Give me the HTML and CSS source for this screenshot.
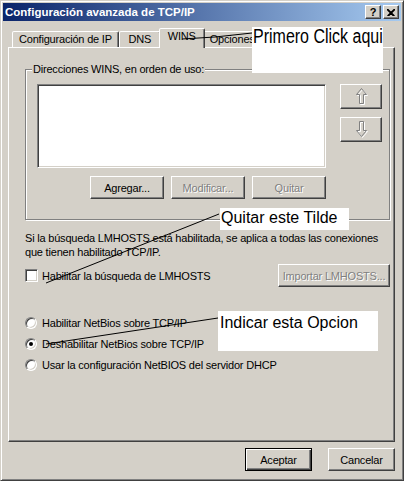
FILE: index.html
```html
<!DOCTYPE html>
<html lang="es">
<head>
<meta charset="UTF-8">
<meta name="viewport" content="width=device-width, initial-scale=1.0">
<title>Configuración avanzada de TCP/IP</title>
<link rel="stylesheet" href="styles.css">
</head>
<body>

<div class="ventana">
  <div class="barra-titulo">
    <span class="titulo">Configuración avanzada de TCP/IP</span>
    <div class="botones-titulo">
      <span class="btn-titulo">?</span>
      <span class="btn-titulo">
        <svg width="8" height="7" viewBox="0 0 8 7"><path d="M0.5 0 L7.5 7 M0 0.5 L6.5 7 M7.5 0 L0.5 7 M8 0.5 L1.5 7" stroke="#000" stroke-width="1.2"/></svg>
      </span>
    </div>
  </div>

  <div class="cuerpo">
    <div class="pestanas">
      <div class="pestana">Configuración de IP</div>
      <div class="pestana">DNS</div>
      <div class="pestana activa">WINS</div>
      <div class="pestana">Opciones</div>
    </div>

    <div class="panel">
      <fieldset class="grupo">
        <legend>Direcciones WINS, en orden de uso:</legend>
        <div class="wins">
          <div class="wins-izq">
            <div class="lista"></div>
            <div class="fila-botones">
              <button class="boton">Agregar...</button>
              <button class="boton" disabled>Modificar...</button>
              <button class="boton" disabled>Quitar</button>
            </div>
          </div>
          <div class="flechas">
            <button class="boton flecha" disabled>
              <svg width="13" height="17" viewBox="0 0 13 17">
                <path d="M7.5 1.5 L12.5 7.5 L9.5 7.5 L9.5 16.5 L5.5 16.5 L5.5 7.5 L2.5 7.5 Z" fill="none" stroke="#fff"/>
                <path d="M6.5 0.5 L11.5 6.5 L8.5 6.5 L8.5 15.5 L4.5 15.5 L4.5 6.5 L1.5 6.5 Z" fill="none" stroke="#808080"/>
              </svg>
            </button>
            <button class="boton flecha" disabled>
              <svg width="13" height="17" viewBox="0 0 13 17">
                <path d="M7.5 16.5 L12.5 10.5 L9.5 10.5 L9.5 1.5 L5.5 1.5 L5.5 10.5 L2.5 10.5 Z" fill="none" stroke="#fff"/>
                <path d="M6.5 15.5 L11.5 9.5 L8.5 9.5 L8.5 0.5 L4.5 0.5 L4.5 9.5 L1.5 9.5 Z" fill="none" stroke="#808080"/>
              </svg>
            </button>
          </div>
        </div>
      </fieldset>

      <p class="aviso">Si la búsqueda LMHOSTS está habilitada, se aplica a todas las conexiones<br>que tienen habilitado TCP/IP.</p>

      <div class="fila-lmhosts">
        <label class="opcion"><span class="casilla"></span>Habilitar la búsqueda de LMHOSTS</label>
        <button class="boton importar" disabled>Importar LMHOSTS...</button>
      </div>

      <div class="radios">
        <label class="opcion"><span class="radio"></span>Habilitar NetBios sobre TCP/IP</label>
        <label class="opcion"><span class="radio marcado"></span>Deshabilitar NetBios sobre TCP/IP</label>
        <label class="opcion"><span class="radio"></span>Usar la configuración NetBIOS del servidor DHCP</label>
      </div>
    </div>

    <div class="pie">
      <button class="boton pred">Aceptar</button>
      <button class="boton">Cancelar</button>
    </div>
  </div>

  <!-- anotaciones pegadas encima de la captura -->
  <svg class="trazos" width="404" height="481" viewBox="0 0 404 481">
    <polyline points="182,39 215,37 252,33" fill="none" stroke="#000"/>
    <line x1="219" y1="214" x2="46" y2="283" stroke="#000"/>
    <line x1="218" y1="318" x2="46" y2="344" stroke="#000"/>
  </svg>
  <div class="nota nota-1"><span>Primero Click aqui</span></div>
  <div class="nota nota-2">Quitar este Tilde</div>
  <div class="nota nota-3">Indicar esta Opcion</div>
</div>

</body>
</html>
```

FILE: styles.css
```css
* { margin: 0; padding: 0; box-sizing: border-box; }

body {
  font-family: "Liberation Sans", Arial, sans-serif;
  font-size: 11px;
  letter-spacing: -0.2px;
  color: #000;
  background: #d4d0c8;
}

.ventana {
  position: relative;
  width: 404px;
  height: 481px;
  background: #d4d0c8;
  border: 1px solid;
  border-color: #d4d0c8 #404040 #404040 #d4d0c8;
  box-shadow: inset 1px 1px #fff, inset -1px -1px #808080;
  padding: 2px;
}

/* Barra de titulo */

.barra-titulo {
  height: 18px;
  background: linear-gradient(90deg, #0a246a, #a6caf0);
  display: flex;
  align-items: center;
  justify-content: space-between;
  padding: 0 2px;
}

.titulo {
  color: #fff;
  font-weight: bold;
  font-size: 11.5px;
  letter-spacing: 0;
}

.botones-titulo {
  display: flex;
  gap: 2px;
}

.btn-titulo {
  width: 16px;
  height: 14px;
  background: #d4d0c8;
  border: 1px solid;
  border-color: #fff #404040 #404040 #fff;
  box-shadow: inset -1px -1px #808080;
  display: flex;
  align-items: center;
  justify-content: center;
  font-weight: bold;
  font-size: 11px;
  line-height: 1;
}

/* Pestanas */

.cuerpo {
  padding: 7px 6px 0 5px;
}

.pestanas {
  display: flex;
  align-items: flex-end;
  height: 20px;
  padding-left: 4px;
  margin-bottom: -1px;
  position: relative;
  z-index: 1;
}

.pestana {
  height: 16px;
  min-width: 42px;
  margin-bottom: 1px;
  padding: 0 6px;
  line-height: 15px;
  text-align: center;
  white-space: nowrap;
  border: 1px solid;
  border-bottom: none;
  border-color: #fff #404040 transparent #fff;
  box-shadow: inset -1px 0 #808080;
  border-radius: 2px 2px 0 0;
  background: #d4d0c8;
}

.pestana.activa {
  height: 20px;
  margin: 0 -2px;
  padding: 0 8px;
  line-height: 15px;
  position: relative;
  z-index: 2;
}

.panel {
  height: 395px;
  border: 1px solid;
  border-color: #fff #404040 #404040 #fff;
  box-shadow: inset -1px -1px #808080;
  padding: 0 4px 0 16px;
}

/* Grupo WINS */

.grupo {
  margin-top: 15px;
  border: 1px solid #808080;
  box-shadow: inset 1px 1px #fff, 1px 1px #fff;
  padding: 8px 7px 20px 11px;
  min-width: 0;
}

.grupo legend {
  margin-left: -5px;
  padding: 0 1px;
  line-height: 13px;
  background: #d4d0c8;
}

.wins {
  display: flex;
  gap: 14px;
}

.wins-izq {
  width: 289px;
}

.lista {
  height: 84px;
  background: #fff;
  border: 1px solid;
  border-color: #808080 #fff #fff #808080;
  box-shadow: inset 1px 1px #404040, inset -1px -1px #d4d0c8;
}

.fila-botones {
  display: flex;
  justify-content: flex-end;
  gap: 7px;
  margin-top: 8px;
}

.flechas {
  display: flex;
  flex-direction: column;
  gap: 8px;
}

/* Botones */

.boton {
  font: inherit;
  letter-spacing: inherit;
  color: #000;
  width: 74px;
  height: 23px;
  background: #d4d0c8;
  border: 1px solid;
  border-color: #fff #404040 #404040 #fff;
  box-shadow: inset -1px -1px #808080;
  display: flex;
  align-items: center;
  justify-content: center;
}

.boton:disabled {
  color: #808080;
  text-shadow: 1px 1px #fff;
}

.boton.flecha {
  width: 42px;
  height: 25px;
}

.boton.importar {
  width: 112px;
}

.boton.pred {
  border: 1px solid #000;
  box-shadow: inset 1px 1px #fff, inset -1px -1px #404040, inset -2px -2px #808080;
}

/* Opciones de abajo */

.aviso {
  margin-top: 11px;
  line-height: 14px;
}

.fila-lmhosts {
  display: flex;
  align-items: center;
  justify-content: space-between;
  margin-top: 5px;
}

.opcion {
  display: flex;
  align-items: center;
  gap: 4px;
  height: 21px;
  white-space: nowrap;
}

.casilla {
  width: 13px;
  height: 13px;
  background: #fff;
  border: 1px solid;
  border-color: #808080 #fff #fff #808080;
  box-shadow: inset 1px 1px #404040, inset -1px -1px #d4d0c8;
}

.radios {
  margin-top: 25px;
  display: flex;
  flex-direction: column;
}

.radio {
  width: 12px;
  height: 12px;
  margin-right: 1px;
  border-radius: 50%;
  background: #fff;
  border: 1px solid;
  border-color: #808080 #fff #fff #808080;
  box-shadow: inset 1px 1px #404040, inset -1px -1px #d4d0c8;
  display: flex;
  align-items: center;
  justify-content: center;
}

.radio.marcado::after {
  content: "";
  width: 4px;
  height: 4px;
  border-radius: 50%;
  background: #000;
}

.pie {
  display: flex;
  justify-content: flex-end;
  gap: 16px;
  margin-top: 6px;
}

.pie .boton {
  width: 67px;
}

/* Anotaciones */

.trazos {
  position: absolute;
  left: -1px;
  top: -1px;
  pointer-events: none;
  z-index: 5;
}

.nota {
  position: absolute;
  z-index: 4;
  background: #fff;
  color: #000;
  font-size: 16px;
  line-height: 16px;
  letter-spacing: 0;
  white-space: nowrap;
}

.nota-1 {
  left: 251px;
  top: 26px;
  width: 131px;
  height: 46px;
  padding-left: 1px;
}

.nota-1 span {
  display: inline-block;
  transform: scaleY(1.25);
  transform-origin: 0 0;
}

.nota-2 {
  left: 219px;
  top: 207px;
  width: 129px;
  height: 22px;
  padding: 2px 0 0 1px;
}

.nota-3 {
  left: 217px;
  top: 310px;
  width: 160px;
  height: 40px;
  padding: 4px 0 0 2px;
}
```
